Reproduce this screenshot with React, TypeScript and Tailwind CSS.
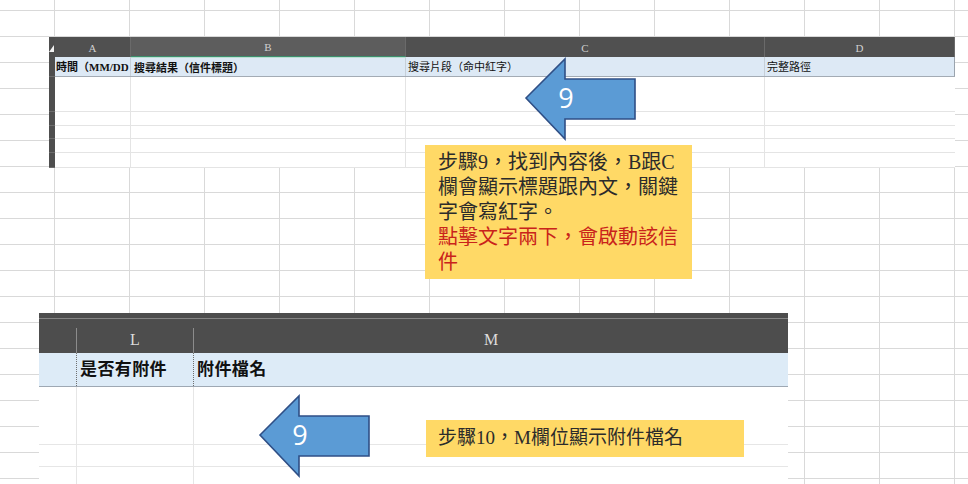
import React from 'react'

const SERIF = "font-['Liberation_Serif','Noto_Sans_CJK_TC',serif]"

const GRID_COLS = 14
const GRID_ROWS = 20

// Excel sheet behind everything
function SheetGrid() {
  return (
    <div className="grid grid-cols-[55px_repeat(13,75px)] grid-rows-[11px_repeat(19,26px)]">
      {Array.from({ length: GRID_COLS * GRID_ROWS }, (_, i) => (
        <div key={i} className="border-r border-b border-[#d9d9d9]" />
      ))}
    </div>
  )
}

// left-pointing block arrow with a number in it
function BlockArrow({ label, className }: { label: string; className: string }) {
  return (
    <div className={className}>
      <svg width="116" height="86" viewBox="0 0 116 86">
        <path
          d="M3 42 L42 3 L42 23 L112 23 L112 63 L42 63 L42 83 Z"
          fill="#5b9bd5"
          stroke="#2f4f86"
          strokeWidth="1.6"
          strokeLinejoin="miter"
        />
        <text
          x="43"
          y="52"
          textAnchor="middle"
          fill="#ffffff"
          fontSize="27"
          fontFamily="'Open Sans','Noto Sans',sans-serif"
        >
          {label}
        </text>
      </svg>
    </div>
  )
}

function TopShot() {
  const rows = ['h-[35px]', 'h-[14px]', 'h-[13px]', 'h-[14px]', 'h-[15px]']
  return (
    <div className="absolute left-[49px] top-[37px] flex h-[131px] w-[906px] bg-white">
      {/* row headers */}
      <div className="flex w-[6px] flex-col bg-[#4e4e4e]">
        <div className="relative h-[20px]">
          <svg className="absolute left-0 top-[8px]" width="5" height="7" viewBox="0 0 5 7">
            <path d="M5 0 L5 7 L0 7 Z" fill="#f2f2f2" />
          </svg>
        </div>
        <div className="h-[20px] border-b border-[#6c6c6c]" />
        {rows.map((h, i) => (
          <div key={i} className={`${h} border-b border-[#6c6c6c]`} />
        ))}
      </div>

      <div className="flex flex-1 flex-col">
        {/* column letters */}
        <div className={`flex h-[20px] bg-[#505050] text-[11px] text-[#cfcfcf] ${SERIF}`}>
          <div className="flex w-[76px] items-end justify-center border-r border-[#6a6a6a] pb-[1px]">A</div>
          <div className="flex w-[275px] items-end justify-center border-r border-b border-[#6a6a6a] border-b-[#3d8f6e] bg-[#5d5d5d] pb-[1px]">B</div>
          <div className="flex w-[359px] items-end justify-center border-r border-[#6a6a6a] pb-[1px]">C</div>
          <div className="flex w-[190px] items-end justify-center border-r border-[#6a6a6a] pb-[1px]">D</div>
        </div>

        {/* title row */}
        <div className={`flex h-[20px] border-b border-[#a3abb4] bg-[#dde9f5] text-[11px] font-semibold leading-[20px] text-[#111] ${SERIF}`}>
          <div className="w-[76px] overflow-hidden whitespace-nowrap border-r border-[#c6cfd8] pl-[1px]">時間（MM/DD</div>
          <div className="w-[275px] whitespace-nowrap border-r border-t border-[#c6cfd8] border-t-[#b9e0d2] pl-[3px]">搜尋結果（信件標題）</div>
          <div className="w-[359px] whitespace-nowrap border-r border-[#c6cfd8] pl-[2px] font-normal">搜尋片段（命中紅字）</div>
          <div className="w-[190px] whitespace-nowrap border-r border-[#9aa3ad] pl-[2px] font-normal">完整路徑</div>
        </div>

        {rows.map((h, i) => (
          <div key={i} className={`flex ${h} border-b border-[#e4e4e4]`}>
            <div className="w-[76px] border-r border-[#e4e4e4]" />
            <div className="w-[275px] border-r border-[#e4e4e4]" />
            <div className="w-[359px] border-r border-[#e4e4e4]" />
            <div className="w-[190px]" />
          </div>
        ))}
      </div>
    </div>
  )
}

function BottomShot() {
  const rows = ['h-[58px]', 'h-[22px]', 'flex-1']
  return (
    <div className="absolute left-[39px] top-[313px] flex h-[171px] w-[749px] flex-col bg-white">
      {/* column letters */}
      <div className={`flex h-[40px] flex-col bg-[#4d4d4d] text-[16px] text-[#dcdcdc] ${SERIF}`}>
        <div className="h-[8px] border-b border-[#858585]" />
        <div className="flex flex-1">
          <div className="w-[37px]" />
          <div className="mt-[9px] flex w-[117px] items-center justify-center border-l border-[#8c8c8c] pb-[1px]">L</div>
          <div className="mt-[9px] flex w-[595px] items-center justify-center border-l border-[#8c8c8c] pb-[1px]">M</div>
        </div>
      </div>

      {/* title row */}
      <div className={`flex h-[34px] border-b border-[#9ea8b3] bg-[#ddebf7] text-[17px] font-semibold leading-[34px] text-[#111] ${SERIF}`}>
        <div className="w-[37px]" />
        <div className="w-[117px] whitespace-nowrap border-l border-dotted border-[#6f6f6f] pl-[3px] tracking-[0.4px]">是否有附件</div>
        <div className="w-[595px] whitespace-nowrap border-l border-dotted border-[#6f6f6f] pl-[3px] tracking-[0.4px]">附件檔名</div>
      </div>

      {rows.map((h, i) => (
        <div key={i} className={`flex ${h} ${i < 2 ? 'border-b border-[#e6e6e6]' : ''}`}>
          <div className="w-[37px]" />
          <div className="w-[117px] border-l border-[#e6e6e6]" />
          <div className="w-[595px] border-l border-[#e6e6e6]" />
        </div>
      ))}
    </div>
  )
}

export default function App() {
  return (
    <div className="relative h-[484px] w-[968px] overflow-hidden bg-white">
      <SheetGrid />

      <TopShot />
      <BottomShot />

      <BlockArrow label="9" className="absolute left-[523px] top-[56px]" />
      <BlockArrow label="9" className="absolute left-[257px] top-[393px]" />

      {/* step 9 note */}
      <div className={`absolute left-[425px] top-[145px] h-[134px] w-[267px] bg-[#ffd966] px-[13px] pt-[5px] text-[20px] leading-[25px] text-[#2b2b2b] ${SERIF}`}>
        <p className="whitespace-nowrap">步驟9，找到內容後，B跟C</p>
        <p className="whitespace-nowrap">欄會顯示標題跟內文，關鍵</p>
        <p className="whitespace-nowrap">字會寫紅字。</p>
        <p className="whitespace-nowrap text-[#c9231b]">點擊文字兩下，會啟動該信</p>
        <p className="whitespace-nowrap text-[#c9231b]">件</p>
      </div>

      {/* step 10 note */}
      <div className={`absolute left-[426px] top-[420px] flex h-[37px] w-[318px] items-center bg-[#ffd966] pl-[12px] text-[19px] text-[#2b2b2b] ${SERIF}`}>
        步驟10，M欄位顯示附件檔名
      </div>
    </div>
  )
}
